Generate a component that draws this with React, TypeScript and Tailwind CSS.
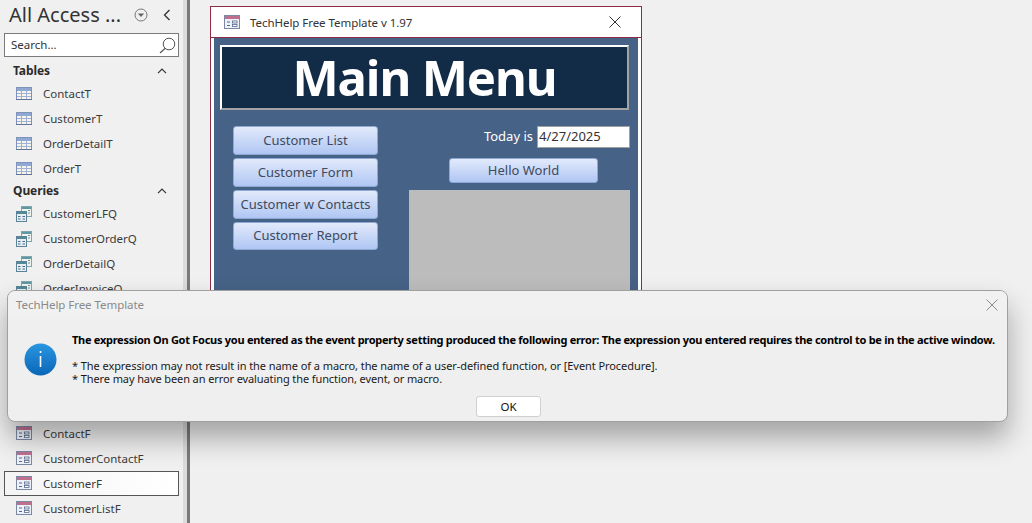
const ui = "font-['Noto_Sans','Open_Sans',sans-serif]";

const TableIcon = () => (
  <svg width="16" height="13" viewBox="0 0 16 13" className="shrink-0">
    <rect x="0.5" y="0.5" width="15" height="12" fill="#f6f4ea" stroke="#7f93b8" />
    <rect x="1" y="1" width="14" height="3" fill="#8fa8d4" />
    <path d="M1 6.5H15M1 9.5H15M5.5 4V12.5M10.5 4V12.5" stroke="#9fb2d6" fill="none" />
    <path d="M0 12.5H16" stroke="#5f7498" />
  </svg>
);

const QueryIcon = () => (
  <svg width="16" height="16" viewBox="0 0 16 16" className="mt-[2px] shrink-0">
    <rect x="5.5" y="0.5" width="10" height="10" fill="#eef3ee" stroke="#7fa6ad" />
    <rect x="6" y="1" width="9" height="2" fill="#5f98a0" />
    <path d="M12 4.5H14M12 7H14" stroke="#6f8fa0" fill="none" />
    <rect x="0.5" y="5.5" width="10" height="10" fill="#e8eef4" stroke="#5b8296" />
    <rect x="1" y="6" width="9" height="2" fill="#4f8a96" />
    <path d="M2 10.5H4.5M2 13H4.5M6.5 10.5H9M6.5 13H9" stroke="#4a6c86" fill="none" />
  </svg>
);

const FormIcon = () => (
  <svg width="16" height="14" viewBox="0 0 16 14" className="shrink-0">
    <rect x="0.5" y="0.5" width="15" height="13" fill="#eef2f8" stroke="#7b88a4" />
    <rect x="1" y="1" width="14" height="3" fill="#c0708f" />
    <path d="M3 7H6M3 10.5H6" stroke="#55688c" fill="none" />
    <rect x="8.5" y="6" width="4.5" height="2" fill="#fff" stroke="#55688c" strokeWidth="0.8" />
    <rect x="8.5" y="9.5" width="4.5" height="2" fill="#fff" stroke="#55688c" strokeWidth="0.8" />
  </svg>
);

const Caret = () => (
  <svg width="10" height="6" viewBox="0 0 10 6" className="shrink-0">
    <path d="M1 5.2L5 1.2L9 5.2" fill="none" stroke="#333" strokeWidth="1.2" />
  </svg>
);

const NavHeader = ({ label }: { label: string }) => (
  <div className="flex h-5 items-center justify-between pl-[13px] pr-[16px]">
    <span className="text-[12px] font-bold tracking-[-0.1px] text-[#2b2b2b]">{label}</span>
    <Caret />
  </div>
);

const NavRow = ({ label, icon, active }: { label: string; icon: React.ReactNode; active?: boolean }) => (
  <div
    className={
      active
        ? "mx-1 flex h-[25px] items-center gap-[11px] border border-[#555] bg-gradient-to-r from-[#f4f4f4] to-white pl-[11px] text-[11.5px] text-[#3a3a3a]"
        : "mx-1 flex h-[25px] items-center gap-[11px] pl-[12px] text-[11.5px] text-[#3a3a3a]"
    }
  >
    <span className="flex w-[16px] justify-center">{icon}</span>
    <span className="pt-[2px]">{label}</span>
  </div>
);

const Sidebar = () => (
  <aside className="w-[183px] shrink-0 bg-[#f0f0f0]">
    <div className="flex h-[30px] items-center pl-[9px]">
      <span className="w-[122px] text-[20px] leading-none text-[#333]">All Access ...</span>
      <svg width="14" height="14" viewBox="0 0 14 14" className="ml-[3px] shrink-0">
        <circle cx="7" cy="7" r="6" fill="none" stroke="#777" />
        <path d="M3.8 5.6H10.2L7 9Z" fill="#666" />
      </svg>
      <svg width="8" height="12" viewBox="0 0 8 12" className="ml-[15px] shrink-0">
        <path d="M6.5 1L1.5 6L6.5 11" fill="none" stroke="#333" strokeWidth="1.3" />
      </svg>
    </div>
    <div className="mx-1 mt-[3px] flex h-[24px] items-center justify-between border border-[#7a7a7a] bg-white pl-[6px] pr-[2px] text-[11.5px] text-[#333]">
      <span>Search...</span>
      <svg width="17" height="17" viewBox="0 0 17 17">
        <circle cx="10" cy="7" r="5.8" fill="none" stroke="#555" />
        <path d="M6 11.5L1 16" stroke="#555" strokeWidth="1.2" />
      </svg>
    </div>
    <div className="mt-[3.5px]">
      <NavHeader label="Tables" />
      {["ContactT", "CustomerT", "OrderDetailT", "OrderT"].map((n) => (
        <NavRow key={n} label={n} icon={<TableIcon />} />
      ))}
      <NavHeader label="Queries" />
      {["CustomerLFQ", "CustomerOrderQ", "OrderDetailQ", "OrderInvoiceQ"].map((n) => (
        <NavRow key={n} label={n} icon={<QueryIcon />} />
      ))}
      {/* rows behind the dialog */}
      <div className="h-[120px]" />
      {["ContactF", "CustomerContactF", "CustomerF", "CustomerListF"].map((n) => (
        <NavRow key={n} label={n} icon={<FormIcon />} active={n === "CustomerF"} />
      ))}
    </div>
  </aside>
);

const MenuButton = ({ label, className }: { label: string; className: string }) => (
  <div
    className={
      "flex items-center justify-center rounded-[3px] border border-[#8fa9d6] bg-gradient-to-b from-[#e2eafb] to-[#b0c6f3] text-[13px] text-[#3f4a5c] " +
      className
    }
  >
    {label}
  </div>
);

const FormWindow = () => (
  <div className="ml-[20px] mt-[6px] h-[400px] w-[432px] border border-[#8e2c48] bg-white">
    <div className="flex h-[31px] items-center border-b border-[#8e2c48] bg-white pl-[13px] pr-[20px]">
      <FormIcon />
      <span className="ml-[10px] flex-1 pt-[1px] text-[11.5px] tracking-[-0.05px] text-[#333]">
        TechHelp Free Template v 1.97
      </span>
      <svg width="12" height="12" viewBox="0 0 12 12">
        <path d="M0.5 0.5L11.5 11.5M11.5 0.5L0.5 11.5" stroke="#333" />
      </svg>
    </div>
    <div className="mx-[3px] h-[369px] bg-[#466286] pl-[6px] pr-[9px] pt-[7px]">
      <div className="flex h-[65px] items-center justify-center border-2 border-white border-b-[#a3a3a3] border-r-[#a3a3a3] bg-[#122b46] text-[49px] font-bold tracking-[-1.1px] text-white">
        Main Menu
      </div>
      <div className="mt-[16px] flex">
        <div className="ml-[13px] flex w-[145px] shrink-0 flex-col gap-[3px]">
          <MenuButton label="Customer List" className="h-[29px]" />
          <MenuButton label="Customer Form" className="h-[29px]" />
          <MenuButton label="Customer w Contacts" className="h-[29px]" />
          <MenuButton label="Customer Report" className="h-[28px]" />
        </div>
        <div className="ml-[31px] flex w-[221px] shrink-0 flex-col">
          <div className="flex h-[22px] items-center justify-end gap-[4px]">
            <span className="text-[13px] text-white">Today is</span>
            <div className="flex h-[22px] w-[93px] items-center border border-[#a0a0a0] bg-white pl-[1px] text-[13px] text-[#333]">
              4/27/2025
            </div>
          </div>
          <MenuButton label="Hello World" className="ml-[40px] mt-[10px] h-[25px] w-[149px]" />
          <div className="mt-[7px] h-[200px] bg-[#bcbcbc]" />
        </div>
      </div>
    </div>
  </div>
);

const ErrorDialog = () => (
  <div className="absolute left-[7px] top-[290px] h-[132px] w-[1001px] overflow-hidden rounded-lg border border-[#a0a0a0] bg-[#efefef] shadow-[0_16px_28px_rgba(0,0,0,0.32)]">
    <div className="flex h-[28px] items-center justify-between bg-[#f1f1f1] pl-[8px] pr-[9px]">
      <span className="text-[11.5px] tracking-[-0.05px] text-[#8a8a8a]">TechHelp Free Template</span>
      <svg width="12" height="12" viewBox="0 0 12 12">
        <path d="M0.5 0.5L11.5 11.5M11.5 0.5L0.5 11.5" stroke="#8c8c8c" />
      </svg>
    </div>
    <div className="flex pl-[16px]">
      <svg width="33" height="33" viewBox="0 0 33 33" className="mt-[24px] shrink-0">
        <defs>
          <linearGradient id="info" x1="0" y1="0" x2="0" y2="1">
            <stop offset="0" stopColor="#2a96e0" />
            <stop offset="1" stopColor="#0a66b8" />
          </linearGradient>
        </defs>
        <circle cx="16.5" cy="16.5" r="16" fill="url(#info)" />
        <rect x="15.7" y="8" width="1.6" height="2" fill="#fff" />
        <rect x="15.7" y="13" width="1.6" height="11" fill="#fff" />
      </svg>
      <div className="ml-[15px] pt-[14px] text-[11px] leading-[13px] text-[#1a1a1a]">
        <p className="whitespace-nowrap text-[11px] font-bold tracking-[-0.27px] text-black">
          The expression On Got Focus you entered as the event property setting produced the following error: The expression you entered requires the control to be in the active window.
        </p>
        <p className="mt-[13px] whitespace-nowrap tracking-[-0.07px]">
          * The expression may not result in the name of a macro, the name of a user-defined function, or [Event Procedure].
        </p>
        <p className="whitespace-nowrap tracking-[-0.1px]">
          * There may have been an error evaluating the function, event, or macro.
        </p>
      </div>
    </div>
    <div className="absolute bottom-[4px] left-[468px] flex h-[21px] w-[65px] items-center justify-center rounded-[3px] border border-[#d0d0d0] bg-white text-[11.5px] text-[#111]">
      OK
    </div>
  </div>
);

export default function App() {
  return (
    <div className={"relative flex h-[523px] w-[1032px] overflow-hidden bg-[#f0f0f0] " + ui}>
      <Sidebar />
      <div className="flex w-[7px] shrink-0 bg-[#dcdcdc]">
        <div className="ml-auto h-full w-[3px] bg-[#7a7a7a]" />
      </div>
      <main className="min-w-0 flex-1">
        <FormWindow />
      </main>
      <ErrorDialog />
    </div>
  );
}
